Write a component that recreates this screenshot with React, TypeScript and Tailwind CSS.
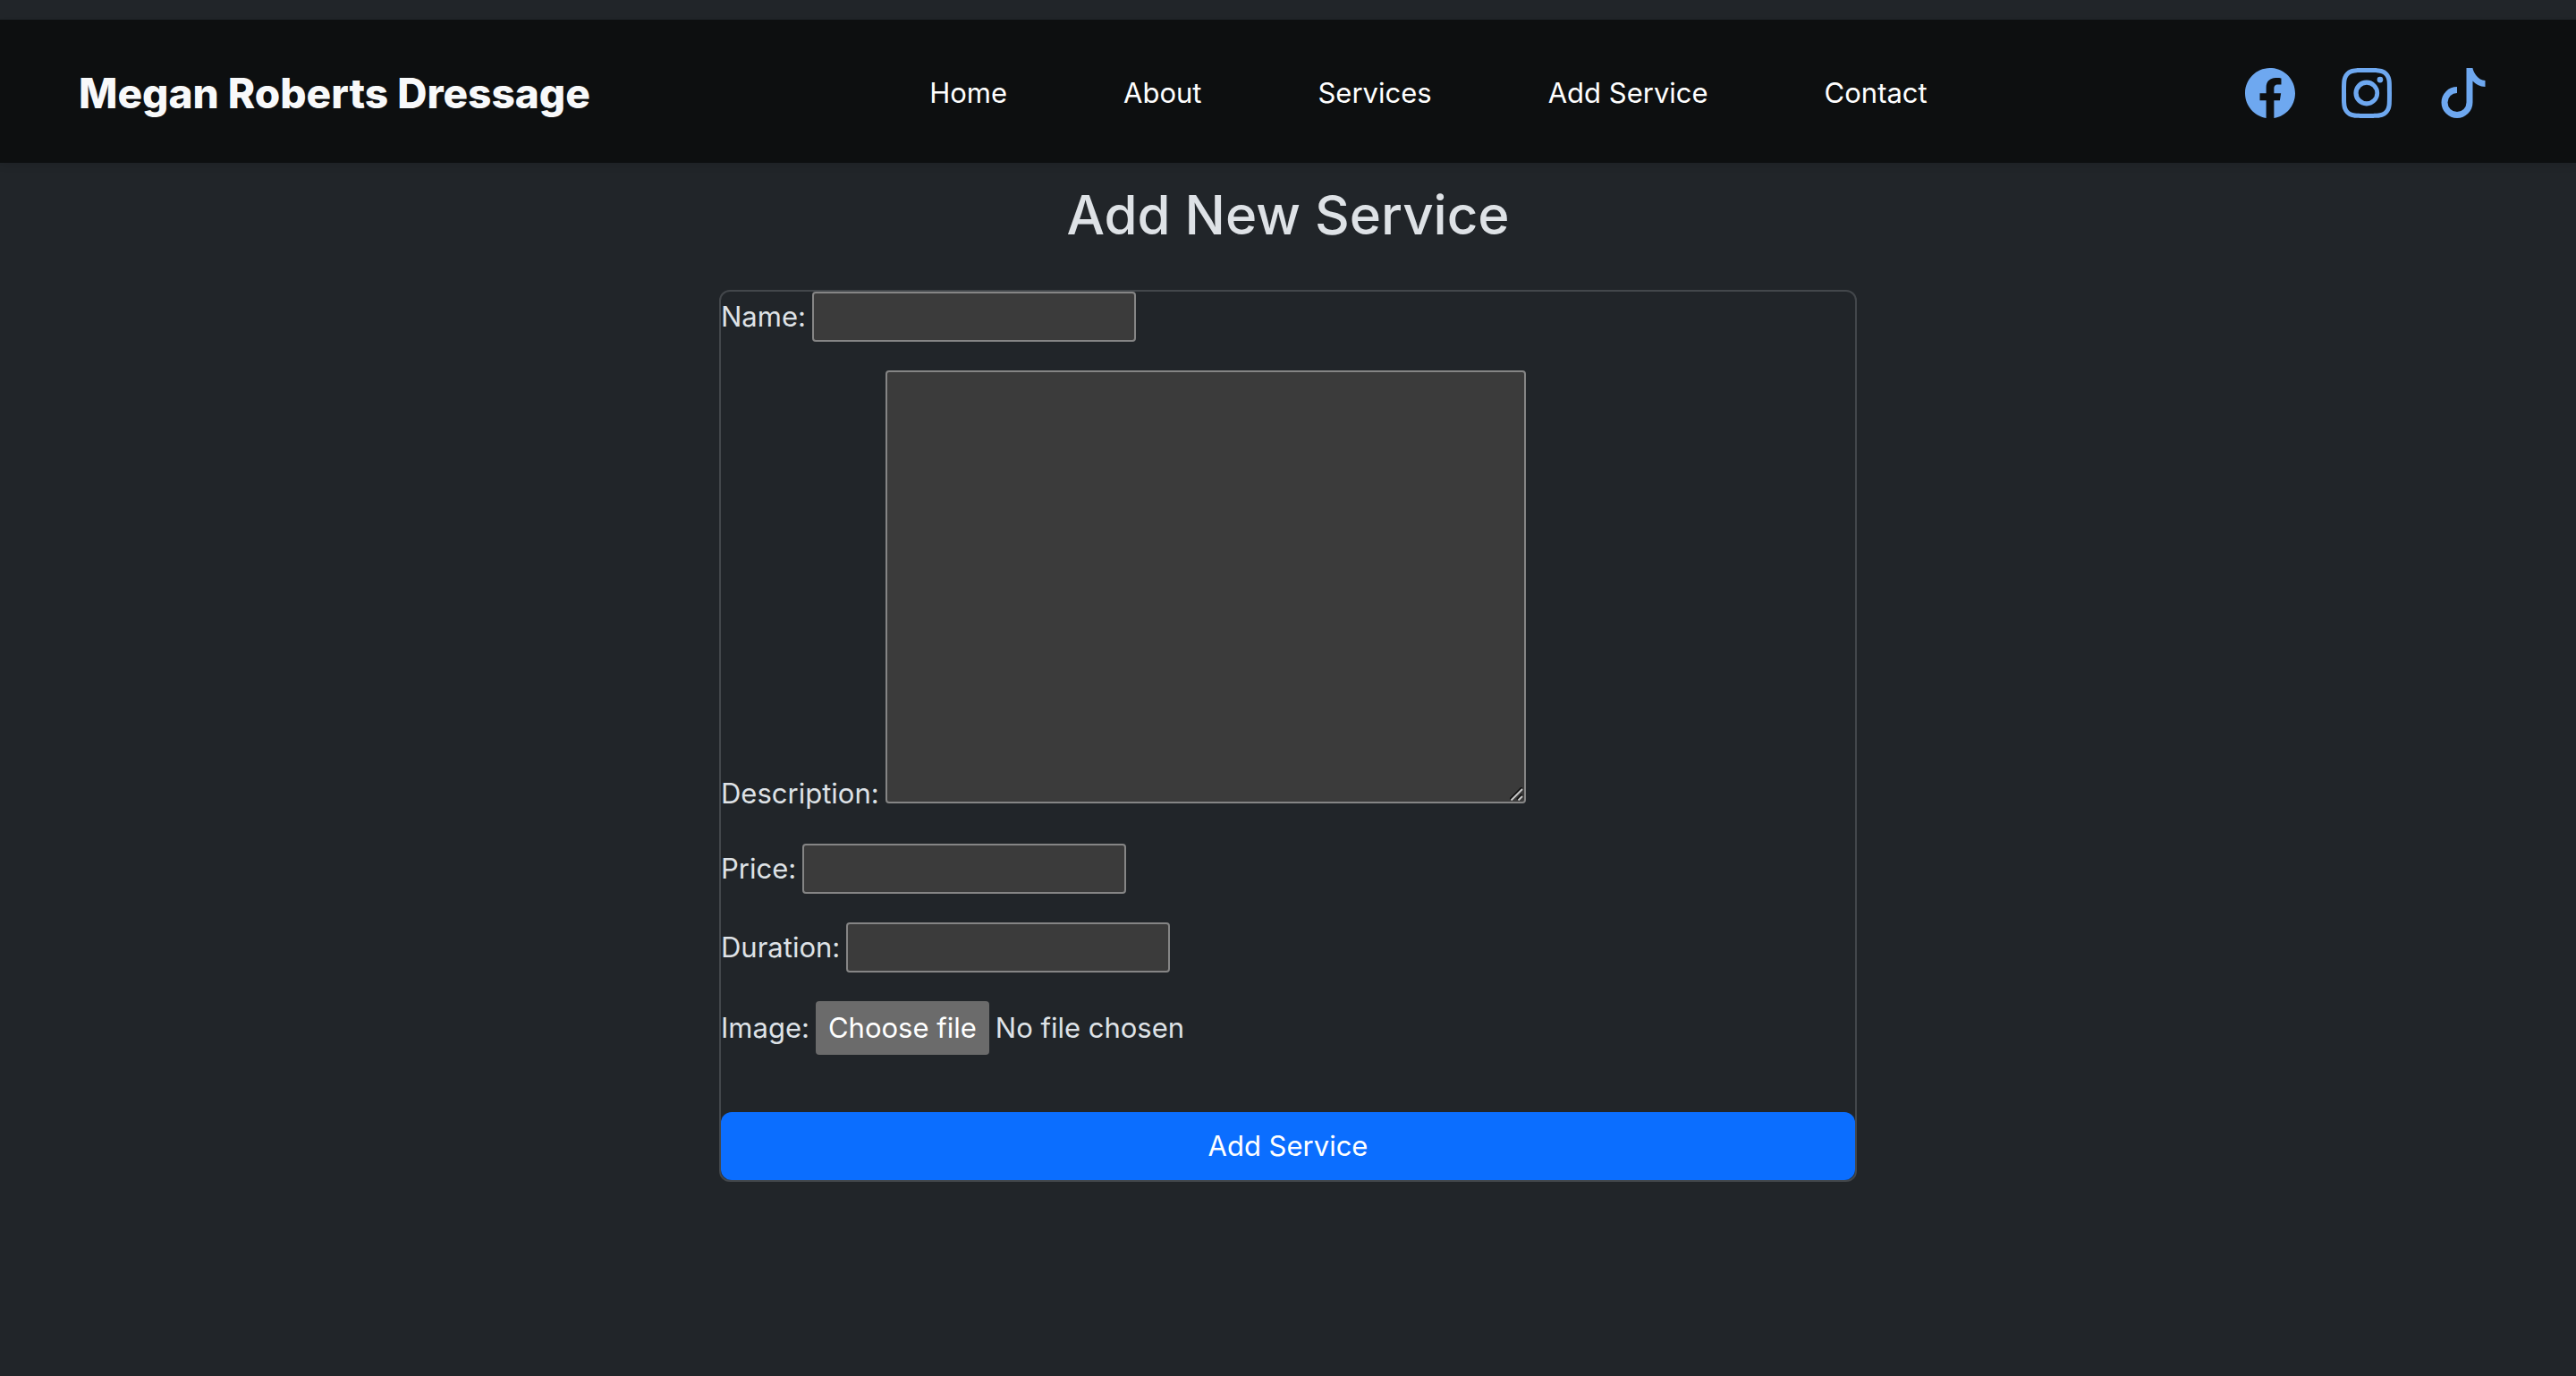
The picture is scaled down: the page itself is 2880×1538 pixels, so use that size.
import { useState } from "react";
import { BsFacebook, BsInstagram, BsTiktok } from "react-icons/bs";

const links = ["Home", "About", "Services", "Add Service", "Contact"];

const socials = [
  { name: "Facebook", Icon: BsFacebook },
  { name: "Instagram", Icon: BsInstagram },
  { name: "TikTok", Icon: BsTiktok },
];

const control =
  "rounded-[4px] border-2 border-[#858585] bg-[#3b3b3b] px-1 text-[#dee2e6]";

function TextField({ id, label }: { id: string; label: string }) {
  return (
    <div className="flex items-center gap-[7px]">
      <label htmlFor={id}>{label}</label>
      <input id={id} name={id} type="text" className={`${control} h-14 w-[362px]`} />
    </div>
  );
}

function ResizeGrip() {
  return (
    <svg
      className="pointer-events-none absolute right-0.5 bottom-0.5 size-4"
      viewBox="0 0 16 16"
      fill="none"
      aria-hidden="true"
    >
      <path d="M0 13.5L13.5 0M8 13.5L13.5 8" stroke="#111" strokeWidth="2" />
      <path d="M1.5 14.5L14 2M9.5 14.5L14 10" stroke="#c4c4c4" strokeWidth="2" />
    </svg>
  );
}

function FileField() {
  const [fileName, setFileName] = useState("No file chosen");
  return (
    <div className="flex items-center gap-[7px]">
      <label htmlFor="image">Image:</label>
      <div className="relative flex items-center gap-[7px]">
        <input
          id="image"
          name="image"
          type="file"
          className="peer sr-only"
          onChange={(e) => setFileName(e.target.files?.[0]?.name ?? "No file chosen")}
        />
        <label
          htmlFor="image"
          className="flex h-[60px] items-center rounded-[4px] bg-[#6b6b6b] px-3.5 text-white peer-focus-visible:outline-2"
        >
          Choose file
        </label>
        <span>{fileName}</span>
      </div>
    </div>
  );
}

function Navbar() {
  return (
    <nav className="flex h-40 items-center justify-between bg-[#0d0f10] pt-1 pr-[98px] pl-[88px] text-white shadow-[0_4px_8px_rgba(0,0,0,0.08)]">
      <a href="#" className="mr-6 text-[46px] leading-[72px] font-extrabold text-[#f8f9fa]">
        Megan Roberts Dressage
      </a>
      <ul className="flex gap-[130px]">
        {links.map((link) => (
          <li key={link}>
            <a href="#">{link}</a>
          </li>
        ))}
      </ul>
      <ul className="flex gap-[52px]">
        {socials.map(({ name, Icon }) => (
          <li key={name}>
            <a href="#" aria-label={name} className="block text-[#6ea8f0]">
              <Icon size={56} />
            </a>
          </li>
        ))}
      </ul>
    </nav>
  );
}

export default function App() {
  return (
    <div className="min-h-screen bg-[#212529] pt-[22px] font-['Inter',sans-serif] text-[31px] leading-[48px] text-[#dee2e6]">
      <Navbar />
      <main>
        <h1 className="mt-5 text-center text-[60px] leading-[76px] font-medium">
          Add New Service
        </h1>
        <form className="mx-auto mt-[46px] max-w-[1272px] rounded-xl border-2 border-[#43474b]">
          <TextField id="name" label="Name:" />
          <div className="mt-8">
            <label htmlFor="description">Description:</label>
            <div className="relative ml-[7px] inline-block">
              <textarea
                id="description"
                name="description"
                className={`${control} block h-[484px] w-[716px] [&::-webkit-resizer]:bg-transparent`}
              />
              <ResizeGrip />
            </div>
          </div>
          <div className="mt-8">
            <TextField id="price" label="Price:" />
          </div>
          <div className="mt-8">
            <TextField id="duration" label="Duration:" />
          </div>
          <div className="mt-8">
            <FileField />
          </div>
          <button
            type="submit"
            className="mt-16 block h-[76px] w-full rounded-xl bg-[#0b6eff] text-white"
          >
            Add Service
          </button>
        </form>
      </main>
    </div>
  );
}
